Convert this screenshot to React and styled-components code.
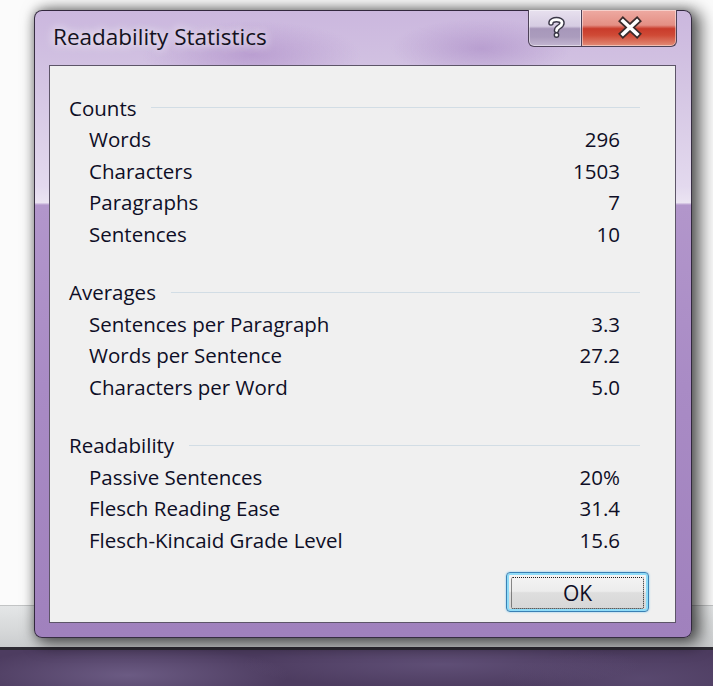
import React from 'react';
import styled, { createGlobalStyle } from 'styled-components';

const GlobalStyle = createGlobalStyle`
  html, body {
    margin: 0;
    padding: 0;
  }
  body {
    width: 713px;
    height: 686px;
    overflow: hidden;
    font-family: "Open Sans", "Noto Sans", sans-serif;
    color: #0e0e26;
  }
`;

const Desktop = styled.div`
  position: relative;
  width: 713px;
  height: 686px;
  display: flex;
  flex-direction: column;
`;

const Page = styled.div`
  height: 605px;
  background: #fbfbfb;
`;

const TaskStrip = styled.div`
  height: 41px;
  border-top: 1px solid #c2c4c5;
  background: linear-gradient(180deg, #e4e6e7 0%, #d6d8d9 60%, #caccce 100%);
`;

const Seam = styled.div`
  height: 3px;
  background: #2d2a33;
`;

const Wallpaper = styled.div`
  flex: 1;
  background:
    radial-gradient(ellipse 160px 30px at 18% 70%, rgba(120, 104, 146, 0.7), transparent),
    radial-gradient(ellipse 200px 24px at 62% 40%, rgba(110, 94, 136, 0.55), transparent),
    radial-gradient(ellipse 140px 30px at 90% 80%, rgba(96, 80, 120, 0.6), transparent),
    #4d3c60;
`;

const Window = styled.div`
  position: absolute;
  left: 34px;
  top: 10px;
  width: 658px;
  height: 628px;
  box-sizing: border-box;
  display: flex;
  flex-direction: column;
  padding: 0 15px 14px 14px;
  border: 1px solid rgba(38, 30, 48, 0.9);
  border-radius: 8px;
  box-shadow: 6px 3px 16px 3px rgba(0, 0, 0, 0.6), 0 0 10px rgba(0, 0, 0, 0.25);
  background:
    radial-gradient(ellipse 110px 34px at 33% 7%, rgba(168, 132, 196, 0.55), transparent),
    radial-gradient(ellipse 90px 30px at 68% 6%, rgba(162, 128, 192, 0.5), transparent),
    linear-gradient(180deg, #cbb7de 0%, #d4c5e3 12%, #e3d9ee 28%, #ebe4f2 30.6%, #b296cb 31%, #a98bc5 60%, #a081bd 100%);
`;

const TitleBar = styled.div`
  height: 54px;
  display: flex;
  align-items: flex-start;
  justify-content: space-between;
`;

const Title = styled.div`
  margin-top: 11px;
  padding-left: 4px;
  font-size: 22.5px;
  line-height: 30px;
  color: #141220;
  text-shadow: 0 0 8px rgba(255, 255, 255, 0.9), 0 0 14px rgba(255, 255, 255, 0.6);
`;

const CaptionButtons = styled.div`
  display: flex;
  margin-top: -1px;
  margin-right: -1px;
`;

const CaptionButton = styled.div`
  width: ${(p) => p.$width}px;
  height: 37px;
  box-sizing: border-box;
  border: 1px solid #4d4258;
  border-top: none;
  border-radius: ${(p) => (p.$close ? '0 0 6px 0' : '0 0 0 6px')};
  border-left: ${(p) => (p.$close ? 'none' : '1px solid #4d4258')};
  box-shadow: inset 0 0 0 1px rgba(255, 255, 255, 0.45);
  background: ${(p) =>
    p.$close
      ? 'linear-gradient(180deg, #eeaaa2 0%, #e48f84 42%, #c93b2b 52%, #cf4a36 70%, #e28c78 100%)'
      : 'linear-gradient(180deg, #e8e1ef 0%, #d6cce2 45%, #a797ba 52%, #ab9cbd 75%, #c3b6d1 100%)'};
  svg {
    display: block;
  }
`;

const Panel = styled.div`
  flex: 1;
  display: flex;
  flex-direction: column;
  padding: 26px 0 10px 0;
  background: #f0f0f0;
  border: 1px solid #5d5568;
  font-size: 20.5px;
`;

const Section = styled.div`
  padding-left: 19px;
  & + & {
    margin-top: 27px;
  }
`;

const SectionHead = styled.div`
  display: flex;
  align-items: center;
  height: 31.5px;
  padding-right: 35px;
`;

const Rule = styled.div`
  flex: 1;
  height: 1px;
  margin-left: 15px;
  background: #d2dde5;
`;

const Row = styled.div`
  display: flex;
  align-items: center;
  justify-content: space-between;
  height: 31.5px;
  padding-left: 20px;
  padding-right: 55px;
`;

const Footer = styled.div`
  margin-top: auto;
  display: flex;
  justify-content: flex-end;
  padding-right: 26px;
`;

const OkButton = styled.button`
  width: 143px;
  height: 40px;
  padding: 4px;
  box-sizing: border-box;
  border: 1px solid #3b80b4;
  border-radius: 4px;
  box-shadow: inset 0 0 0 2px #8fdcf8, 0 0 2px rgba(80, 190, 240, 0.8);
  background: linear-gradient(180deg, #f5f5f5 0%, #ececec 48%, #dedede 52%, #d6d6d6 100%);
  font-family: inherit;
  font-size: 21px;
  color: #0e0e26;
`;

const FocusRing = styled.span`
  display: flex;
  align-items: center;
  justify-content: center;
  height: 100%;
  border: 1px dotted #1e1e1e;
  border-radius: 2px;
`;

const sections = [
  {
    title: 'Counts',
    rows: [
      ['Words', '296'],
      ['Characters', '1503'],
      ['Paragraphs', '7'],
      ['Sentences', '10'],
    ],
  },
  {
    title: 'Averages',
    rows: [
      ['Sentences per Paragraph', '3.3'],
      ['Words per Sentence', '27.2'],
      ['Characters per Word', '5.0'],
    ],
  },
  {
    title: 'Readability',
    rows: [
      ['Passive Sentences', '20%'],
      ['Flesch Reading Ease', '31.4'],
      ['Flesch-Kincaid Grade Level', '15.6'],
    ],
  },
];

function HelpGlyph() {
  return (
    <svg width="53" height="36" viewBox="0 0 53 36">
      <g fill="none" strokeLinecap="round" strokeLinejoin="round">
        <path d="M22 13 C22 8.5 33 8.5 33 13 C33 17 27.5 16.5 27.5 20.5" stroke="#3b3848" strokeWidth="5.6" />
        <path d="M22 13 C22 8.5 33 8.5 33 13 C33 17 27.5 16.5 27.5 20.5" stroke="#ffffff" strokeWidth="2.8" />
      </g>
      <circle cx="27.5" cy="25" r="2.9" fill="#3b3848" />
      <circle cx="27.5" cy="25" r="1.5" fill="#ffffff" />
    </svg>
  );
}

function CloseGlyph() {
  return (
    <svg width="94" height="36" viewBox="0 0 94 36">
      <g strokeLinecap="square">
        <path d="M41 11 L55 24 M55 11 L41 24" stroke="#3a2a2a" strokeWidth="7" />
        <path d="M41 11 L55 24 M55 11 L41 24" stroke="#ffffff" strokeWidth="3.6" />
      </g>
    </svg>
  );
}

function App() {
  return (
    <>
      <GlobalStyle />
      <Desktop>
        <Page />
        <TaskStrip />
        <Seam />
        <Wallpaper />
        <Window>
          <TitleBar>
            <Title>Readability Statistics</Title>
            <CaptionButtons>
              <CaptionButton $width={54}>
                <HelpGlyph />
              </CaptionButton>
              <CaptionButton $width={95} $close>
                <CloseGlyph />
              </CaptionButton>
            </CaptionButtons>
          </TitleBar>
          <Panel>
            {sections.map((section) => (
              <Section key={section.title}>
                <SectionHead>
                  {section.title}
                  <Rule />
                </SectionHead>
                {section.rows.map(([label, value]) => (
                  <Row key={label}>
                    <span>{label}</span>
                    <span>{value}</span>
                  </Row>
                ))}
              </Section>
            ))}
            <Footer>
              <OkButton>
                <FocusRing>OK</FocusRing>
              </OkButton>
            </Footer>
          </Panel>
        </Window>
      </Desktop>
    </>
  );
}

export default App;
